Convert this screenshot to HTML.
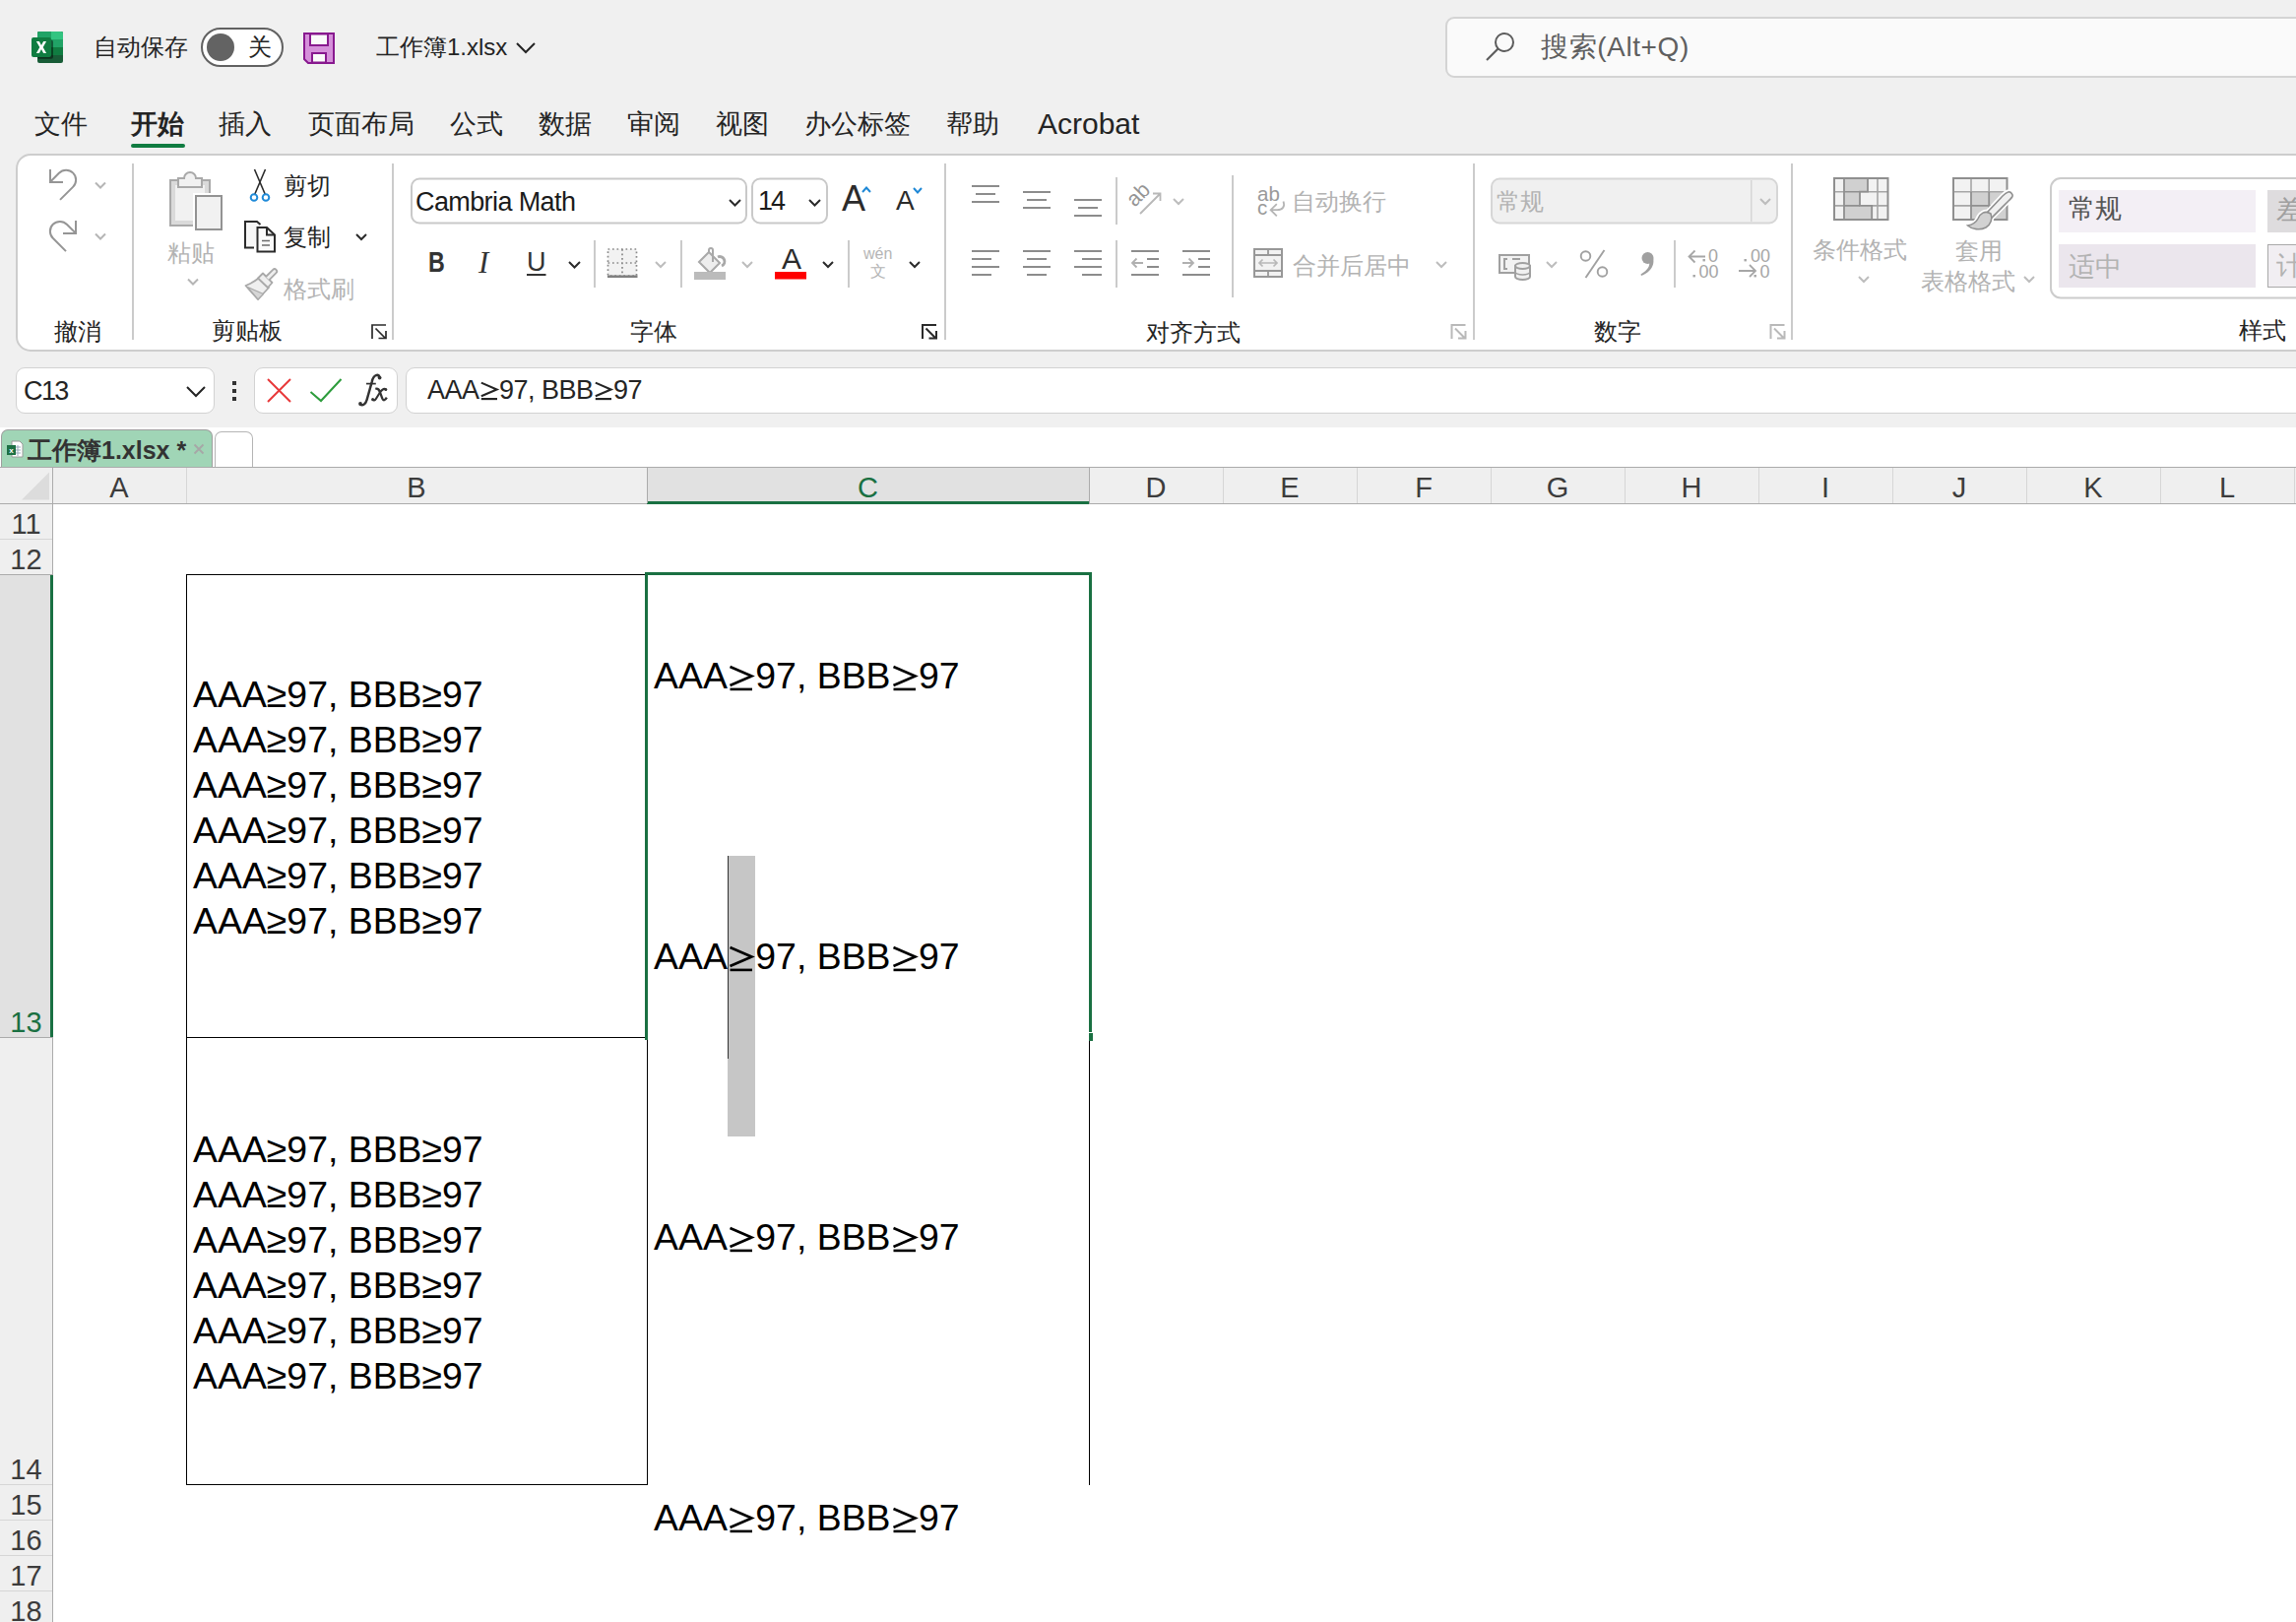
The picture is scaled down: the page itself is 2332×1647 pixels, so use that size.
<!DOCTYPE html>
<html><head><meta charset="utf-8">
<style>
*{margin:0;padding:0;box-sizing:border-box}
html,body{width:2332px;height:1647px;overflow:hidden;background:#f0f0f0;font-family:"Liberation Sans",sans-serif;color:#242424}
.a{position:absolute}
.t{position:absolute;white-space:nowrap;line-height:1}
svg{position:absolute;overflow:visible}
.g{color:#b3b3b3}
.ge{position:static!important;display:inline-block;vertical-align:-3px}
.sep{position:absolute;width:2px;background:#c9c9c9}
</style></head><body>

<!-- ===== TITLE BAR ===== -->
<svg style="left:32px;top:32px" width="32" height="32" viewBox="0 0 32 32">
  <rect x="6" y="0" width="26" height="32" rx="2" fill="#185c37"/>
  <path d="M8 0 H30 A2 2 0 0 1 32 2 V24 H6 V2 A2 2 0 0 1 8 0 Z" fill="#107c41"/>
  <path d="M8 0 H20 V16 H6 V2 A2 2 0 0 1 8 0 Z" fill="#21a366"/>
  <path d="M20 0 H30 A2 2 0 0 1 32 2 V8 H20 Z" fill="#33c481"/>
  <rect x="20" y="8" width="12" height="8" fill="#21a366"/>
  <rect x="6" y="8.4" width="16" height="19.3" rx="2" fill="#000" opacity=".45"/>
  <rect x="0" y="6" width="20" height="20" rx="2" fill="#107c41"/>
  <path d="M4.9 10.1 H7.9 L10 13.9 L12.1 10.1 H15.1 L11.7 16 L15.1 22 H12.1 L10 18.1 L7.9 22 H4.9 L8.3 16 Z" fill="#fff"/>
</svg>
<div class="t" style="left:95px;top:36px;font-size:24px">自动保存</div>
<div class="a" style="left:204px;top:28px;width:84px;height:40px;border:2px solid #616161;border-radius:20px;background:#fff"></div>
<div class="a" style="left:210px;top:34px;width:28px;height:28px;border-radius:14px;background:#636363"></div>
<div class="t" style="left:252px;top:36px;font-size:24px">关</div>
<svg style="left:308px;top:33px" width="32" height="32" viewBox="0 0 32 32">
  <path d="M1 1 H31 V31 H5 L1 27 Z" fill="#d590da" stroke="#88198f" stroke-width="2"/>
  <rect x="7" y="1.5" width="18" height="11.5" fill="#fafafa" stroke="#88198f" stroke-width="2"/>
  <rect x="9" y="21" width="14" height="9.5" fill="#fafafa" stroke="#88198f" stroke-width="2"/>
</svg>
<div class="t" style="left:382px;top:36px;font-size:24px">工作簿1.xlsx</div>
<svg style="left:524px;top:43px" width="20" height="12" viewBox="0 0 20 12"><path d="M1 1 L10 10 L19 1" fill="none" stroke="#242424" stroke-width="2"/></svg>

<div class="a" style="left:1468px;top:17px;width:900px;height:62px;border:2px solid #d4d4d4;border-radius:9px;background:#fafafa"></div>
<svg style="left:1508px;top:33px" width="32" height="30" viewBox="0 0 32 30">
  <circle cx="20" cy="10" r="9" fill="none" stroke="#5c5c5c" stroke-width="2"/>
  <path d="M13.5 16.5 L2 28" stroke="#5c5c5c" stroke-width="2.2"/>
</svg>
<div class="t" style="left:1565px;top:34px;font-size:28px;letter-spacing:0.6px;color:#5f5f5f">搜索(Alt+Q)</div>

<!-- ===== MENU TABS ===== -->
<div class="t" style="left:35px;top:113px;font-size:27px">文件</div>
<div class="t" style="left:133px;top:113px;font-size:27px;font-weight:bold">开始</div>
<div class="a" style="left:133px;top:146px;width:55px;height:4px;border-radius:2px;background:#107c41"></div>
<div class="t" style="left:222px;top:113px;font-size:27px">插入</div>
<div class="t" style="left:313px;top:113px;font-size:27px">页面布局</div>
<div class="t" style="left:457px;top:113px;font-size:27px">公式</div>
<div class="t" style="left:547px;top:113px;font-size:27px">数据</div>
<div class="t" style="left:637px;top:113px;font-size:27px">审阅</div>
<div class="t" style="left:727px;top:113px;font-size:27px">视图</div>
<div class="t" style="left:817px;top:113px;font-size:27px">办公标签</div>
<div class="t" style="left:961px;top:113px;font-size:27px">帮助</div>
<div class="t" style="left:1054px;top:111px;font-size:30px">Acrobat</div>

<!-- ===== RIBBON ===== -->
<div class="a" style="left:16px;top:156px;width:2400px;height:201px;border:2px solid #cdcdcd;border-radius:15px;background:#fff"></div>


<!-- ribbon icons -->
<svg style="left:0;top:0" width="2332" height="360" viewBox="0 0 2332 360">
 <g fill="none" stroke-linecap="butt">
  <!-- undo -->
  <path d="M51 172 V185 H64" stroke="#959595" stroke-width="2"/>
  <path d="M51.5 184.2 L59.93 175.73 A10 10 0 1 1 74.07 189.87 L61 202.9" stroke="#959595" stroke-width="2"/>
  <path d="M97 185.5 L102 190.5 L107 185.5" stroke="#b5b5b5" stroke-width="2"/>
  <!-- redo -->
  <path d="M77 224 V237 H64" stroke="#959595" stroke-width="2"/>
  <path d="M76.5 236.4 L68.07 227.93 A10 10 0 1 0 53.93 242.07 L67 255.1" stroke="#959595" stroke-width="2"/>
  <path d="M97 237.5 L102 242.5 L107 237.5" stroke="#b5b5b5" stroke-width="2"/>
 </g>
 <!-- separators -->
 <rect x="134" y="166" width="2" height="179" fill="#cbcbcb"/>
 <rect x="398" y="166" width="2" height="179" fill="#cbcbcb"/>
 <rect x="959" y="166" width="2" height="179" fill="#cbcbcb"/>
 <rect x="1496" y="166" width="2" height="179" fill="#cbcbcb"/>
 <rect x="1819" y="166" width="2" height="179" fill="#cbcbcb"/>

 <!-- paste -->
 <rect x="173" y="183" width="40" height="46" fill="#dadada" stroke="#a9a9a9" stroke-width="2"/>
 <rect x="178" y="188" width="30" height="36" fill="#f1f1f1"/>
 <path d="M181 190 V181 H187 A6 6 0 0 1 199 181 H205 V190 Z" fill="#f1f1f1" stroke="#a9a9a9" stroke-width="2"/>
 <rect x="196" y="196" width="32" height="40" fill="#fff"/>
 <rect x="199" y="199" width="26" height="34" fill="#f1f1f1" stroke="#939393" stroke-width="2"/>
 <path d="M191 283.5 L196 288.5 L201 283.5" fill="none" stroke="#b5b5b5" stroke-width="2"/>
 <!-- scissors -->
 <path d="M258.5 172 L270 199 M269.5 172 L258 199" stroke="#2b2b2b" stroke-width="1.6" fill="none"/>
 <circle cx="258" cy="200.5" r="3.3" fill="#fff" stroke="#1f8ad8" stroke-width="2"/>
 <circle cx="270" cy="200.5" r="3.3" fill="#fff" stroke="#1f8ad8" stroke-width="2"/>
 <!-- copy -->
 <path d="M258 251.5 H249 V225 H261 L264.5 228" fill="#f7f7f7" stroke="#2b2b2b" stroke-width="2"/>
 <path d="M261.5 255.5 V231 H271 L279 238.5 V255.5 Z" fill="#fafafa" stroke="#2b2b2b" stroke-width="2"/>
 <path d="M271 231 V238.5 H279" fill="none" stroke="#2b2b2b" stroke-width="2"/>
 <path d="M266 244.5 H274 M266 249 H274" stroke="#6b6b6b" stroke-width="1.6"/>
 <path d="M362 238 L367 243 L372 238" fill="none" stroke="#2b2b2b" stroke-width="2"/>
 <!-- format painter -->
 <path d="M262.5 282.5 C258 286.5 253 288.5 249.5 290 L262 304 L273 292 Z" fill="#efefef" stroke="#a9a9a9" stroke-width="1.8" stroke-linejoin="round"/>
 <path d="M251.5 291.5 L267.5 298.5 L262 304 Z" fill="#d6d6d6" stroke="#a9a9a9" stroke-width="1.2" stroke-linejoin="round"/>
 <path d="M262 282.5 L267 277.5 L276.5 287 L272 292 Z" fill="#efefef" stroke="#a9a9a9" stroke-width="1.8" stroke-linejoin="round"/>
 <path d="M270 281 L277.2 273.8 A2.3 2.3 0 0 1 280.5 277.1 L273.3 284.3" fill="#efefef" stroke="#a9a9a9" stroke-width="1.8"/>
 <path d="M378 344 V330 H392 M381.5 333.5 L391.5 343.5 M384.5 343.5 H392 V336" fill="none" stroke="#2b2b2b" stroke-width="1.7"/>

 <!-- font name / size boxes -->
 <rect x="418" y="181.5" width="340" height="45" rx="8" fill="#fff" stroke="#c9c9c9" stroke-width="2"/>
 <rect x="764" y="181.5" width="76" height="45" rx="8" fill="#fff" stroke="#c9c9c9" stroke-width="2"/>
 <path d="M741 203 L746.5 208.5 L752 203" fill="none" stroke="#2b2b2b" stroke-width="2"/>
 <path d="M822 203 L827.5 208.5 L833 203" fill="none" stroke="#2b2b2b" stroke-width="2"/>
 <!-- grow / shrink font -->
 <path d="M876 195 L880 190.5 L884 195" fill="none" stroke="#1e88d6" stroke-width="2"/>
 <path d="M928 191 L932 195.5 L936 191" fill="none" stroke="#1e88d6" stroke-width="2"/>
 <!-- row 2 font -->
 <path d="M578 266 L583.5 271.5 L589 266" fill="none" stroke="#2b2b2b" stroke-width="2"/>
 <rect x="603" y="244" width="2" height="48" fill="#cbcbcb"/>
 <rect x="617.5" y="253" width="29" height="27" fill="#f2f2f2" stroke="#8a8a8a" stroke-width="1.7" stroke-dasharray="1.7 2.8"/>
 <path d="M632 253 V280 M617.5 267 H646.5" stroke="#8a8a8a" stroke-width="1.7" stroke-dasharray="1.7 2.8"/>
 <rect x="617" y="279.5" width="30.5" height="2.5" fill="#808080"/>
 <path d="M666 266 L671 271 L676 266" fill="none" stroke="#bdbdbd" stroke-width="2"/>
 <rect x="691" y="244" width="2" height="48" fill="#cbcbcb"/>
 <!-- fill bucket -->
 <path d="M710 266 L720 256 L731 267 L721 277 Z" fill="#eeeeee" stroke="#a9a9a9" stroke-width="2"/>
 <path d="M720 256 V254 A2 2 0 0 1 724 254 V266" fill="none" stroke="#a9a9a9" stroke-width="2"/>
 <path d="M729 261 A4 4 0 0 1 733 270" fill="none" stroke="#a9a9a9" stroke-width="3"/>
 <rect x="705" y="276" width="32" height="8" fill="#bbbbbb"/>
 <path d="M754 266 L759 271 L764 266" fill="none" stroke="#bdbdbd" stroke-width="2"/>
 <!-- font color -->
 <rect x="787" y="276" width="32" height="7.5" fill="#ff0000"/>
 <path d="M836 266 L841 271 L846 266" fill="none" stroke="#2b2b2b" stroke-width="2"/>
 <rect x="861" y="244" width="2" height="48" fill="#cbcbcb"/>
 <path d="M924 266 L929 271 L934 266" fill="none" stroke="#2b2b2b" stroke-width="2"/>
 <path d="M937 344 V330 H951 M940.5 333.5 L950.5 343.5 M943.5 343.5 H951 V336" fill="none" stroke="#2b2b2b" stroke-width="2"/>

 <!-- alignment -->
 <g fill="#8c8c8c">
  <rect x="987" y="188" width="28" height="2"/><rect x="991" y="196" width="20" height="2"/><rect x="987" y="204" width="28" height="2"/>
  <rect x="1039" y="194" width="28" height="2"/><rect x="1043" y="202" width="20" height="2"/><rect x="1039" y="210" width="28" height="2"/>
  <rect x="1091" y="202" width="28" height="2"/><rect x="1095" y="210" width="20" height="2"/><rect x="1091" y="218" width="28" height="2"/>
  <rect x="987" y="254" width="28" height="2"/><rect x="987" y="262" width="20" height="2"/><rect x="987" y="270" width="28" height="2"/><rect x="987" y="278" width="20" height="2"/>
  <rect x="1039" y="254" width="28" height="2"/><rect x="1043" y="262" width="20" height="2"/><rect x="1039" y="270" width="28" height="2"/><rect x="1043" y="278" width="20" height="2"/>
  <rect x="1091" y="254" width="28" height="2"/><rect x="1099" y="262" width="20" height="2"/><rect x="1091" y="270" width="28" height="2"/><rect x="1099" y="278" width="20" height="2"/>
  <rect x="1149" y="254" width="28" height="2"/><rect x="1165" y="262" width="12" height="2"/><rect x="1165" y="270" width="12" height="2"/><rect x="1149" y="278" width="28" height="2"/>
  <rect x="1201" y="254" width="28" height="2"/><rect x="1217" y="262" width="12" height="2"/><rect x="1217" y="270" width="12" height="2"/><rect x="1201" y="278" width="28" height="2"/>
 </g>
 <path d="M1161 267 H1150 M1154.5 262.5 L1150 267 L1154.5 271.5" fill="none" stroke="#b0b0b0" stroke-width="1.8"/>
 <path d="M1201 267 H1212 M1207.5 262.5 L1212 267 L1207.5 271.5" fill="none" stroke="#b0b0b0" stroke-width="1.8"/>
 <rect x="1133" y="180" width="2" height="48" fill="#cbcbcb"/>
 <rect x="1133" y="244" width="2" height="48" fill="#cbcbcb"/>
 <!-- orientation -->
 <text x="0" y="0" transform="translate(1152.5 211) rotate(-45)" font-family="Liberation Sans" font-size="21.5" fill="#959595">ab</text>
 <path d="M1158 217 L1178 197 M1171 196.5 H1178.5 V204" fill="none" stroke="#b8b8b8" stroke-width="1.8"/>
 <path d="M1192 202 L1197 207 L1202 202" fill="none" stroke="#bdbdbd" stroke-width="2"/>
 <rect x="1251" y="178" width="2" height="124" fill="#cbcbcb"/>
 <!-- wrap text -->
 <text x="1277" y="203.7" font-family="Liberation Sans" font-size="20.5" fill="#9a9a9a">ab</text>
 <text x="1277" y="217.8" font-family="Liberation Sans" font-size="20.5" fill="#9a9a9a">c</text>
 <path d="M1303.5 204.5 C1305.5 210 1302.5 213.2 1297 213.2 H1291 M1296.8 207.2 L1290.6 213.2 L1296.8 219.4" fill="none" stroke="#b5b5b5" stroke-width="1.8"/>
 <!-- merge -->
 <rect x="1274" y="253" width="28" height="28" fill="#f2f2f2" stroke="#989898" stroke-width="2"/>
 <path d="M1288 253 V259 M1274 259 H1302 M1274 275 H1302 M1288 275 V281" stroke="#989898" stroke-width="1.8"/>
 <path d="M1279 267 H1297 M1282.5 263.5 L1279 267 L1282.5 270.5 M1293.5 263.5 L1297 267 L1293.5 270.5" fill="none" stroke="#b8b8b8" stroke-width="1.7"/>
 <path d="M1459 266 L1464 271 L1469 266" fill="none" stroke="#bdbdbd" stroke-width="2"/>
 <path d="M1474.5 344 V330 H1488.5 M1478 333.5 L1488 343.5 M1481 343.5 H1488.5 V336" fill="none" stroke="#b9b9b9" stroke-width="2"/>

 <!-- number -->
 <rect x="1515" y="181.5" width="290" height="45" rx="8" fill="#f0f0f0" stroke="#d6d6d6" stroke-width="2"/>
 <rect x="1778" y="183" width="1.5" height="42" fill="#d6d6d6"/>
 <path d="M1788 202 L1793 207 L1798 202" fill="none" stroke="#bdbdbd" stroke-width="2"/>
 <!-- accounting -->
 <rect x="1523" y="259" width="30" height="18" fill="#f2f2f2" stroke="#a0a0a0" stroke-width="2"/>
 <path d="M1531 263 H1528 V273 H1531" fill="none" stroke="#a0a0a0" stroke-width="2"/>
 <path d="M1536 263 H1544" stroke="#a0a0a0" stroke-width="2"/>
 <path d="M1539 270 V281 A7.5 3 0 0 0 1554 281 V270 Z" fill="#f0f0f0" stroke="#a0a0a0" stroke-width="2"/>
 <ellipse cx="1546.5" cy="270" rx="7.5" ry="3" fill="#f0f0f0" stroke="#a0a0a0" stroke-width="2"/>
 <path d="M1539 276 A7.5 3 0 0 0 1554 276" fill="none" stroke="#a0a0a0" stroke-width="1.6"/>
 <!-- percent -->
 <circle cx="1610.5" cy="260" r="4.8" fill="none" stroke="#a0a0a0" stroke-width="1.9"/>
 <circle cx="1627.5" cy="276" r="4.8" fill="none" stroke="#a0a0a0" stroke-width="1.9"/>
 <path d="M1629.5 254 L1610.5 282" stroke="#a0a0a0" stroke-width="1.9"/>
 <!-- comma style -->
 <circle cx="1673.5" cy="262" r="6" fill="#a0a0a0"/>
 <path d="M1676 258 C1682 262 1681 275 1667 280 L1666.5 278.5 C1674 274 1676 270 1675 266 Z" fill="#a0a0a0"/>
 <!-- decimals -->
 <g font-family="Liberation Sans" font-size="18" fill="#a6a6a6">
  <text x="1735" y="265.5">0</text>
  <text x="1725.5" y="281.5">00</text>
  <text x="1778" y="265.5">00</text>
  <text x="1787.5" y="281.5">0</text>
 </g>
 <g fill="#a6a6a6">
  <rect x="1729.5" y="263" width="2.4" height="2.4"/><rect x="1719.5" y="279" width="2.4" height="2.4"/>
  <rect x="1771.5" y="263" width="2.4" height="2.4"/><rect x="1781.5" y="279" width="2.4" height="2.4"/>
 </g>
 <path d="M1732 260.5 H1715.5 M1721.5 254.5 L1715.5 260.5 L1721.5 266.5" fill="none" stroke="#a6a6a6" stroke-width="1.8"/>
 <path d="M1766 275 H1783 M1777 269 L1783 275 L1777 281" fill="none" stroke="#a6a6a6" stroke-width="1.8"/>
 <path d="M1571 266 L1576 271 L1581 266" fill="none" stroke="#bdbdbd" stroke-width="2"/>
 <rect x="1700" y="244" width="2" height="48" fill="#cbcbcb"/>
 <path d="M1798.5 344 V330 H1812.5 M1802 333.5 L1812 343.5 M1805 343.5 H1812.5 V336" fill="none" stroke="#b9b9b9" stroke-width="2"/>

 <!-- conditional formatting -->
 <g>
  <rect x="1863" y="181" width="54.5" height="42" fill="#f2f2f2"/>
  <path d="M1863 194.7 H1917.5 M1863 208.9 H1917.5 M1907 181 V223" stroke="#a6a6a6" stroke-width="1.6" fill="none"/>
  <path d="M1873 181 H1897 V194.7 H1889 V208.9 H1901.2 V223 H1873 Z" fill="#d0d0d0" stroke="#8f8f8f" stroke-width="1.8"/>
  <path d="M1873 194.7 H1889 M1873 208.9 H1889" stroke="#8f8f8f" stroke-width="1.6"/>
  <rect x="1863" y="181" width="54.5" height="42" fill="none" stroke="#8f8f8f" stroke-width="2"/>
  <path d="M1888 281 L1893 286 L1898 281" fill="none" stroke="#bdbdbd" stroke-width="2"/>
 </g>
 <!-- format as table -->
 <g>
  <rect x="1984" y="181" width="54.5" height="42" fill="#f2f2f2"/>
  <rect x="2002" y="194.7" width="36.5" height="28.3" fill="#d0d0d0"/>
  <path d="M1984 194.7 H2038.5 M1984 208.9 H2002 M2002 181 V194.7 M2020.2 181 V194.7" stroke="#a6a6a6" stroke-width="1.6" fill="none"/>
  <path d="M2002 194.7 V223 M2020.2 194.7 V223 M2002 208.9 H2038.5" stroke="#8f8f8f" stroke-width="1.8" fill="none"/>
  <rect x="1984" y="181" width="54.5" height="42" fill="none" stroke="#8f8f8f" stroke-width="2"/>
  <path d="M2043.5 197 C2042 193 2038 195 2034 199 L2018 216 L2023 221 L2040 204 C2044 200 2045 199 2043.5 197 Z" fill="#f0f0f0" stroke="#fff" stroke-width="5"/>
  <path d="M2022 217 C2016 213 2011 217 2009 222 C2007 226 2004 228 1998.5 229 C2003 233 2011 234 2017 231 C2022 228 2024 222 2022 217 Z" fill="#d2d2d2" stroke="#fff" stroke-width="5"/>
  <path d="M2043.5 197 C2042 193 2038 195 2034 199 L2018 216 L2023 221 L2040 204 C2044 200 2045 199 2043.5 197 Z" fill="#f0f0f0" stroke="#909090" stroke-width="1.6"/>
  <path d="M2022 217 C2016 213 2011 217 2009 222 C2007 226 2004 228 1998.5 229 C2003 233 2011 234 2017 231 C2022 228 2024 222 2022 217 Z" fill="#d2d2d2" stroke="#909090" stroke-width="1.6"/>
  <path d="M2056 281 L2061 286 L2066 281" fill="none" stroke="#bdbdbd" stroke-width="2"/>
 </g>
 <!-- styles gallery -->
 <rect x="2083" y="181" width="400" height="121.5" rx="10" fill="#fff" stroke="#cccccc" stroke-width="2"/>
 <rect x="2091" y="193" width="200" height="43" fill="#f3eff5"/>
 <rect x="2091" y="248" width="200" height="44" fill="#ebe6ed"/>
 <rect x="2303" y="193" width="40" height="43" fill="#dedcde"/>
 <rect x="2303.5" y="248.5" width="40" height="43" fill="#f1eef2" stroke="#a9a9a9" stroke-width="1"/>
</svg>
<!-- ribbon labels -->
<div class="t" style="left:55px;top:325px;font-size:24px">撤消</div>
<div class="t g" style="left:170px;top:245px;font-size:24px">粘贴</div>
<div class="t" style="left:288px;top:177px;font-size:24px">剪切</div>
<div class="t" style="left:288px;top:229px;font-size:24px">复制</div>
<div class="t g" style="left:288px;top:282px;font-size:24px">格式刷</div>
<div class="t" style="left:215px;top:324px;font-size:24px">剪贴板</div>
<div class="t" style="left:422px;top:192px;font-size:27px;letter-spacing:-0.6px;color:#1b1b1b">Cambria Math</div>
<div class="t" style="left:770px;top:191px;font-size:27px;letter-spacing:-2px;color:#1b1b1b">14</div>
<div class="t" style="left:855px;top:184px;font-size:36px;color:#2b2b2b">A</div>
<div class="t" style="left:910px;top:190px;font-size:28px;color:#2b2b2b">A</div>
<div class="t" style="left:435px;top:252px;font-size:29px;font-weight:bold;color:#333;transform:scaleX(0.8);transform-origin:0 0">B</div>
<div class="t" style="left:486px;top:251px;font-size:31px;font-family:'Liberation Serif',serif;font-style:italic;color:#333">I</div>
<div class="t" style="left:535px;top:253px;font-size:27px;color:#333;text-decoration:underline;text-underline-offset:3px;text-decoration-thickness:2px">U</div>
<div class="t" style="left:794px;top:248px;font-size:30px;color:#2b2b2b">A</div>
<div class="t g" style="left:877px;top:250px;font-size:16px;color:#b5b5b5">wén</div>
<div class="t g" style="left:884px;top:268px;font-size:16px;color:#b5b5b5">文</div>
<div class="t" style="left:640px;top:325px;font-size:24px">字体</div>
<div class="t g" style="left:1312px;top:193px;font-size:24px">自动换行</div>
<div class="t g" style="left:1313px;top:258px;font-size:24px">合并后居中</div>
<div class="t" style="left:1164px;top:326px;font-size:24px">对齐方式</div>
<div class="t g" style="left:1520px;top:193px;font-size:24px">常规</div>
<div class="t g" style="left:1619px;top:325px;font-size:24px;color:#242424">数字</div>
<div class="t g" style="left:1841px;top:242px;font-size:24px">条件格式</div>
<div class="t g" style="left:1986px;top:243px;font-size:24px">套用</div>
<div class="t g" style="left:1951px;top:274px;font-size:24px">表格格式</div>
<div class="t" style="left:2101px;top:199px;font-size:27px;color:#555">常规</div>
<div class="t g" style="left:2101px;top:258px;font-size:27px">适中</div>
<div class="t g" style="left:2312px;top:200px;font-size:27px;color:#a0a0a0">差</div>
<div class="t g" style="left:2312px;top:257px;font-size:27px">计</div>
<div class="t" style="left:2274px;top:324px;font-size:24px">样式</div>

<!-- ===== FORMULA BAR ===== -->
<div class="a" style="left:16px;top:373px;width:202px;height:47px;border:1px solid #d2d2d2;border-radius:9px;background:#fff"></div>
<div class="t" style="left:24px;top:384px;font-size:27px;letter-spacing:-1.6px">C13</div>
<svg style="left:189px;top:392px" width="20" height="12" viewBox="0 0 20 12"><path d="M1 1 L10 10 L19 1" fill="none" stroke="#242424" stroke-width="2"/></svg>
<div class="a" style="left:236px;top:387px;width:4px;height:4px;background:#333"></div>
<div class="a" style="left:236px;top:395px;width:4px;height:4px;background:#333"></div>
<div class="a" style="left:236px;top:403px;width:4px;height:4px;background:#333"></div>
<div class="a" style="left:258px;top:373px;width:146px;height:47px;border:1px solid #d2d2d2;border-radius:9px;background:#fff"></div>

<svg style="left:0;top:360px" width="420" height="70" viewBox="0 360 420 70">
 <path d="M272 385 L295 408 M295 385 L272 408" stroke="#e8393a" stroke-width="2" fill="none"/>
 <path d="M315.5 398 L326 407 L346.5 385" stroke="#2d9c3c" stroke-width="2" fill="none"/>
</svg>
<svg style="left:356px;top:374px" width="44" height="44" viewBox="356 374 44 44">
 <path d="M385.6 383.2 C384.5 379.8 379.5 379.5 377.8 387.5 L372.6 406 C371.2 411 368 412.3 365.8 410.3" fill="none" stroke="#333" stroke-width="2.5"/>
 <circle cx="385.6" cy="383.6" r="1.9" fill="#333"/><circle cx="366" cy="410" r="1.9" fill="#333"/>
 <path d="M372 389.6 H381.8" stroke="#333" stroke-width="1.7"/>
 <path d="M381.3 394.8 C383.8 394.3 385 395 386 398.3 L388.3 404.6 C389.3 407.2 391.2 406.6 392.8 403.6" fill="none" stroke="#333" stroke-width="2.3"/>
 <path d="M392 395.3 C390 394.2 388 395.3 385.6 399 L382 404.8 C381 406.6 379.3 407.2 378.3 405.4" fill="none" stroke="#333" stroke-width="2.1"/>
 <circle cx="391.8" cy="395.6" r="1.5" fill="#333"/><circle cx="378.6" cy="405.4" r="1.5" fill="#333"/>
</svg>
<div class="a" style="left:412px;top:373px;width:2000px;height:47px;border:1px solid #d2d2d2;border-radius:9px;background:#fff"></div>
<div class="t" style="left:434px;top:383px;font-size:27px;letter-spacing:-0.5px">AAA<svg class="ge" width="20.5" height="21.6" viewBox="0 0 28.5 30" style="vertical-align:-2px"><path d="M2.5 5 L24.5 14.5 L2.5 24" fill="none" stroke="#242424" stroke-width="2.9"/><rect x="2.5" y="26.4" width="22.5" height="3" fill="#242424"/></svg>97, BBB<svg class="ge" width="20.5" height="21.6" viewBox="0 0 28.5 30" style="vertical-align:-2px"><path d="M2.5 5 L24.5 14.5 L2.5 24" fill="none" stroke="#242424" stroke-width="2.9"/><rect x="2.5" y="26.4" width="22.5" height="3" fill="#242424"/></svg>97</div>

<!-- ===== SHEET TAB STRIP ===== -->
<div class="a" style="left:0;top:434px;width:2332px;height:40px;background:#fff"></div>
<div class="a" style="left:1px;top:436px;width:215px;height:39px;border:1px solid #9e9e9e;border-bottom:none;border-radius:7px 7px 0 0;background:#a0d5b6"></div>
<div class="t" style="left:28px;top:445px;font-size:25px;font-weight:bold;color:#333">工作簿1.xlsx *</div>

<svg style="left:6px;top:447px" width="18" height="18" viewBox="0 0 18 18">
 <path d="M6 1 H14 L17 4 V17 H6 Z" fill="#fff" stroke="#9a9a9a" stroke-width="1"/>
 <path d="M9 7 H15 M9 10 H15 M9 13 H15 M12 5 V16" stroke="#9ab" stroke-width="1"/>
 <rect x="1" y="5" width="9" height="10" fill="#1d7044"/>
 <text x="5.5" y="13" font-family="Liberation Sans" font-size="8" font-weight="bold" fill="#fff" text-anchor="middle">x</text>
</svg>
<svg style="left:196px;top:450px" width="12" height="12" viewBox="0 0 12 12"><path d="M1.5 1.5 L10.5 10.5 M10.5 1.5 L1.5 10.5" stroke="#a7a7a7" stroke-width="1.8"/></svg>
<div class="a" style="left:218px;top:438px;width:39px;height:37px;border:1px solid #b5b5b5;border-bottom:none;border-radius:7px 7px 0 0;background:#fff"></div>

<!-- ===== COLUMN HEADERS ===== -->
<div class="a" style="left:0;top:474px;width:2332px;height:38px;background:#efefef;border-top:1px solid #ababab;border-bottom:1px solid #ababab"></div>

<div class="a" style="left:657px;top:475px;width:449px;height:36px;background:#e1e1e1"></div>
<div class="a" style="left:657px;top:509px;width:449px;height:3px;background:#1a7042"></div>
<div class="a" style="left:189px;top:475px;width:1px;height:36px;background:#d6d6d6"></div>
<div class="t" style="left:53px;top:481px;width:136px;text-align:center;font-size:29px;color:#3c3c3c">A</div>
<div class="a" style="left:657px;top:475px;width:1px;height:36px;background:#ababab"></div>
<div class="t" style="left:189px;top:481px;width:468px;text-align:center;font-size:29px;color:#3c3c3c">B</div>
<div class="a" style="left:1106px;top:475px;width:1px;height:36px;background:#ababab"></div>
<div class="t" style="left:657px;top:481px;width:449px;text-align:center;font-size:29px;color:#1a7042">C</div>
<div class="a" style="left:1242px;top:475px;width:1px;height:36px;background:#d6d6d6"></div>
<div class="t" style="left:1106px;top:481px;width:136px;text-align:center;font-size:29px;color:#3c3c3c">D</div>
<div class="a" style="left:1378px;top:475px;width:1px;height:36px;background:#d6d6d6"></div>
<div class="t" style="left:1242px;top:481px;width:136px;text-align:center;font-size:29px;color:#3c3c3c">E</div>
<div class="a" style="left:1514px;top:475px;width:1px;height:36px;background:#d6d6d6"></div>
<div class="t" style="left:1378px;top:481px;width:136px;text-align:center;font-size:29px;color:#3c3c3c">F</div>
<div class="a" style="left:1650px;top:475px;width:1px;height:36px;background:#d6d6d6"></div>
<div class="t" style="left:1514px;top:481px;width:136px;text-align:center;font-size:29px;color:#3c3c3c">G</div>
<div class="a" style="left:1786px;top:475px;width:1px;height:36px;background:#d6d6d6"></div>
<div class="t" style="left:1650px;top:481px;width:136px;text-align:center;font-size:29px;color:#3c3c3c">H</div>
<div class="a" style="left:1922px;top:475px;width:1px;height:36px;background:#d6d6d6"></div>
<div class="t" style="left:1786px;top:481px;width:136px;text-align:center;font-size:29px;color:#3c3c3c">I</div>
<div class="a" style="left:2058px;top:475px;width:1px;height:36px;background:#d6d6d6"></div>
<div class="t" style="left:1922px;top:481px;width:136px;text-align:center;font-size:29px;color:#3c3c3c">J</div>
<div class="a" style="left:2194px;top:475px;width:1px;height:36px;background:#d6d6d6"></div>
<div class="t" style="left:2058px;top:481px;width:136px;text-align:center;font-size:29px;color:#3c3c3c">K</div>
<div class="a" style="left:2330px;top:475px;width:1px;height:36px;background:#d6d6d6"></div>
<div class="t" style="left:2194px;top:481px;width:136px;text-align:center;font-size:29px;color:#3c3c3c">L</div>
<svg style="left:0;top:474px" width="53" height="38" viewBox="0 0 53 38"><path d="M50 5.5 V33.5 H22 Z" fill="#dcdcdc"/></svg>
<!-- ===== ROW HEADERS ===== -->
<div class="a" style="left:0;top:512px;width:53px;height:1135px;background:#efefef"></div>
<div class="a" style="left:53px;top:474px;width:1px;height:1173px;background:#ababab"></div>

<!-- ===== GRID ===== -->
<div class="a" style="left:54px;top:512px;width:2278px;height:1135px;background:#fff"></div>
<div class="a" style="left:0;top:584px;width:53px;height:469px;background:#e1e1e1"></div>
<div class="a" style="left:51px;top:584px;width:3px;height:469px;background:#1a7042"></div>
<div class="a" style="left:0;top:547px;width:53px;height:1px;background:#d6d6d6"></div>
<div class="t" style="left:0;top:518px;width:53px;text-align:center;font-size:29px;color:#3c3c3c">11</div>
<div class="a" style="left:0;top:583px;width:53px;height:1px;background:#ababab"></div>
<div class="t" style="left:0;top:554px;width:53px;text-align:center;font-size:29px;color:#3c3c3c">12</div>
<div class="a" style="left:0;top:1053px;width:53px;height:1px;background:#ababab"></div>
<div class="t" style="left:0;top:1024px;width:53px;text-align:center;font-size:29px;color:#1a7042">13</div>
<div class="a" style="left:0;top:1507px;width:53px;height:1px;background:#d6d6d6"></div>
<div class="t" style="left:0;top:1478px;width:53px;text-align:center;font-size:29px;color:#3c3c3c">14</div>
<div class="a" style="left:0;top:1543px;width:53px;height:1px;background:#d6d6d6"></div>
<div class="t" style="left:0;top:1514px;width:53px;text-align:center;font-size:29px;color:#3c3c3c">15</div>
<div class="a" style="left:0;top:1579px;width:53px;height:1px;background:#d6d6d6"></div>
<div class="t" style="left:0;top:1550px;width:53px;text-align:center;font-size:29px;color:#3c3c3c">16</div>
<div class="a" style="left:0;top:1615px;width:53px;height:1px;background:#d6d6d6"></div>
<div class="t" style="left:0;top:1586px;width:53px;text-align:center;font-size:29px;color:#3c3c3c">17</div>
<div class="a" style="left:0;top:1651px;width:53px;height:1px;background:#d6d6d6"></div>
<div class="t" style="left:0;top:1622px;width:53px;text-align:center;font-size:29px;color:#3c3c3c">18</div>
<!-- B13 / B14 boxes -->
<div class="a" style="left:189px;top:583px;width:469px;height:471px;border:1px solid #000"></div>
<div class="a" style="left:189px;top:1053px;width:469px;height:455px;border:1px solid #000"></div>
<div class="a" style="left:1106px;top:1053px;width:1px;height:455px;background:#000"></div>
<div class="t" style="left:196px;top:682px;font-size:37.4px;line-height:46px;color:#000">AAA≥97, BBB≥97<br>AAA≥97, BBB≥97<br>AAA≥97, BBB≥97<br>AAA≥97, BBB≥97<br>AAA≥97, BBB≥97<br>AAA≥97, BBB≥97</div>
<div class="t" style="left:196px;top:1144px;font-size:37.4px;line-height:46px;color:#000">AAA≥97, BBB≥97<br>AAA≥97, BBB≥97<br>AAA≥97, BBB≥97<br>AAA≥97, BBB≥97<br>AAA≥97, BBB≥97<br>AAA≥97, BBB≥97</div>
<!-- grey caret block -->
<div class="a" style="left:739px;top:869px;width:28px;height:285px;background:#c6c6c6"></div>
<div class="a" style="left:739px;top:869px;width:1px;height:206px;background:#333"></div>
<!-- C texts -->
<div class="t" style="left:664px;top:668px;font-size:37.4px;color:#000">AAA<svg class="ge" width="28.5" height="30" viewBox="0 0 28.5 30"><path d="M2.5 5 L24.5 14.5 L2.5 24" fill="none" stroke="#000" stroke-width="2.7"/><rect x="2.5" y="26.6" width="22.5" height="2.6" fill="#000"/></svg>97, BBB<svg class="ge" width="28.5" height="30" viewBox="0 0 28.5 30"><path d="M2.5 5 L24.5 14.5 L2.5 24" fill="none" stroke="#000" stroke-width="2.7"/><rect x="2.5" y="26.6" width="22.5" height="2.6" fill="#000"/></svg>97</div>
<div class="t" style="left:664px;top:953px;font-size:37.4px;color:#000">AAA<svg class="ge" width="28.5" height="30" viewBox="0 0 28.5 30"><path d="M2.5 5 L24.5 14.5 L2.5 24" fill="none" stroke="#000" stroke-width="2.7"/><rect x="2.5" y="26.6" width="22.5" height="2.6" fill="#000"/></svg>97, BBB<svg class="ge" width="28.5" height="30" viewBox="0 0 28.5 30"><path d="M2.5 5 L24.5 14.5 L2.5 24" fill="none" stroke="#000" stroke-width="2.7"/><rect x="2.5" y="26.6" width="22.5" height="2.6" fill="#000"/></svg>97</div>
<div class="t" style="left:664px;top:1238px;font-size:37.4px;color:#000">AAA<svg class="ge" width="28.5" height="30" viewBox="0 0 28.5 30"><path d="M2.5 5 L24.5 14.5 L2.5 24" fill="none" stroke="#000" stroke-width="2.7"/><rect x="2.5" y="26.6" width="22.5" height="2.6" fill="#000"/></svg>97, BBB<svg class="ge" width="28.5" height="30" viewBox="0 0 28.5 30"><path d="M2.5 5 L24.5 14.5 L2.5 24" fill="none" stroke="#000" stroke-width="2.7"/><rect x="2.5" y="26.6" width="22.5" height="2.6" fill="#000"/></svg>97</div>
<div class="t" style="left:664px;top:1523px;font-size:37.4px;color:#000">AAA<svg class="ge" width="28.5" height="30" viewBox="0 0 28.5 30"><path d="M2.5 5 L24.5 14.5 L2.5 24" fill="none" stroke="#000" stroke-width="2.7"/><rect x="2.5" y="26.6" width="22.5" height="2.6" fill="#000"/></svg>97, BBB<svg class="ge" width="28.5" height="30" viewBox="0 0 28.5 30"><path d="M2.5 5 L24.5 14.5 L2.5 24" fill="none" stroke="#000" stroke-width="2.7"/><rect x="2.5" y="26.6" width="22.5" height="2.6" fill="#000"/></svg>97</div>
<!-- selection -->
<div class="a" style="left:655px;top:581px;width:454px;height:3px;background:#1a7042"></div>
<div class="a" style="left:655px;top:581px;width:3px;height:475px;background:#1a7042"></div>
<div class="a" style="left:1106px;top:581px;width:3px;height:467px;background:#1a7042"></div>
<div class="a" style="left:1106px;top:1049px;width:4px;height:8px;background:#1a7042"></div>


</body></html>
